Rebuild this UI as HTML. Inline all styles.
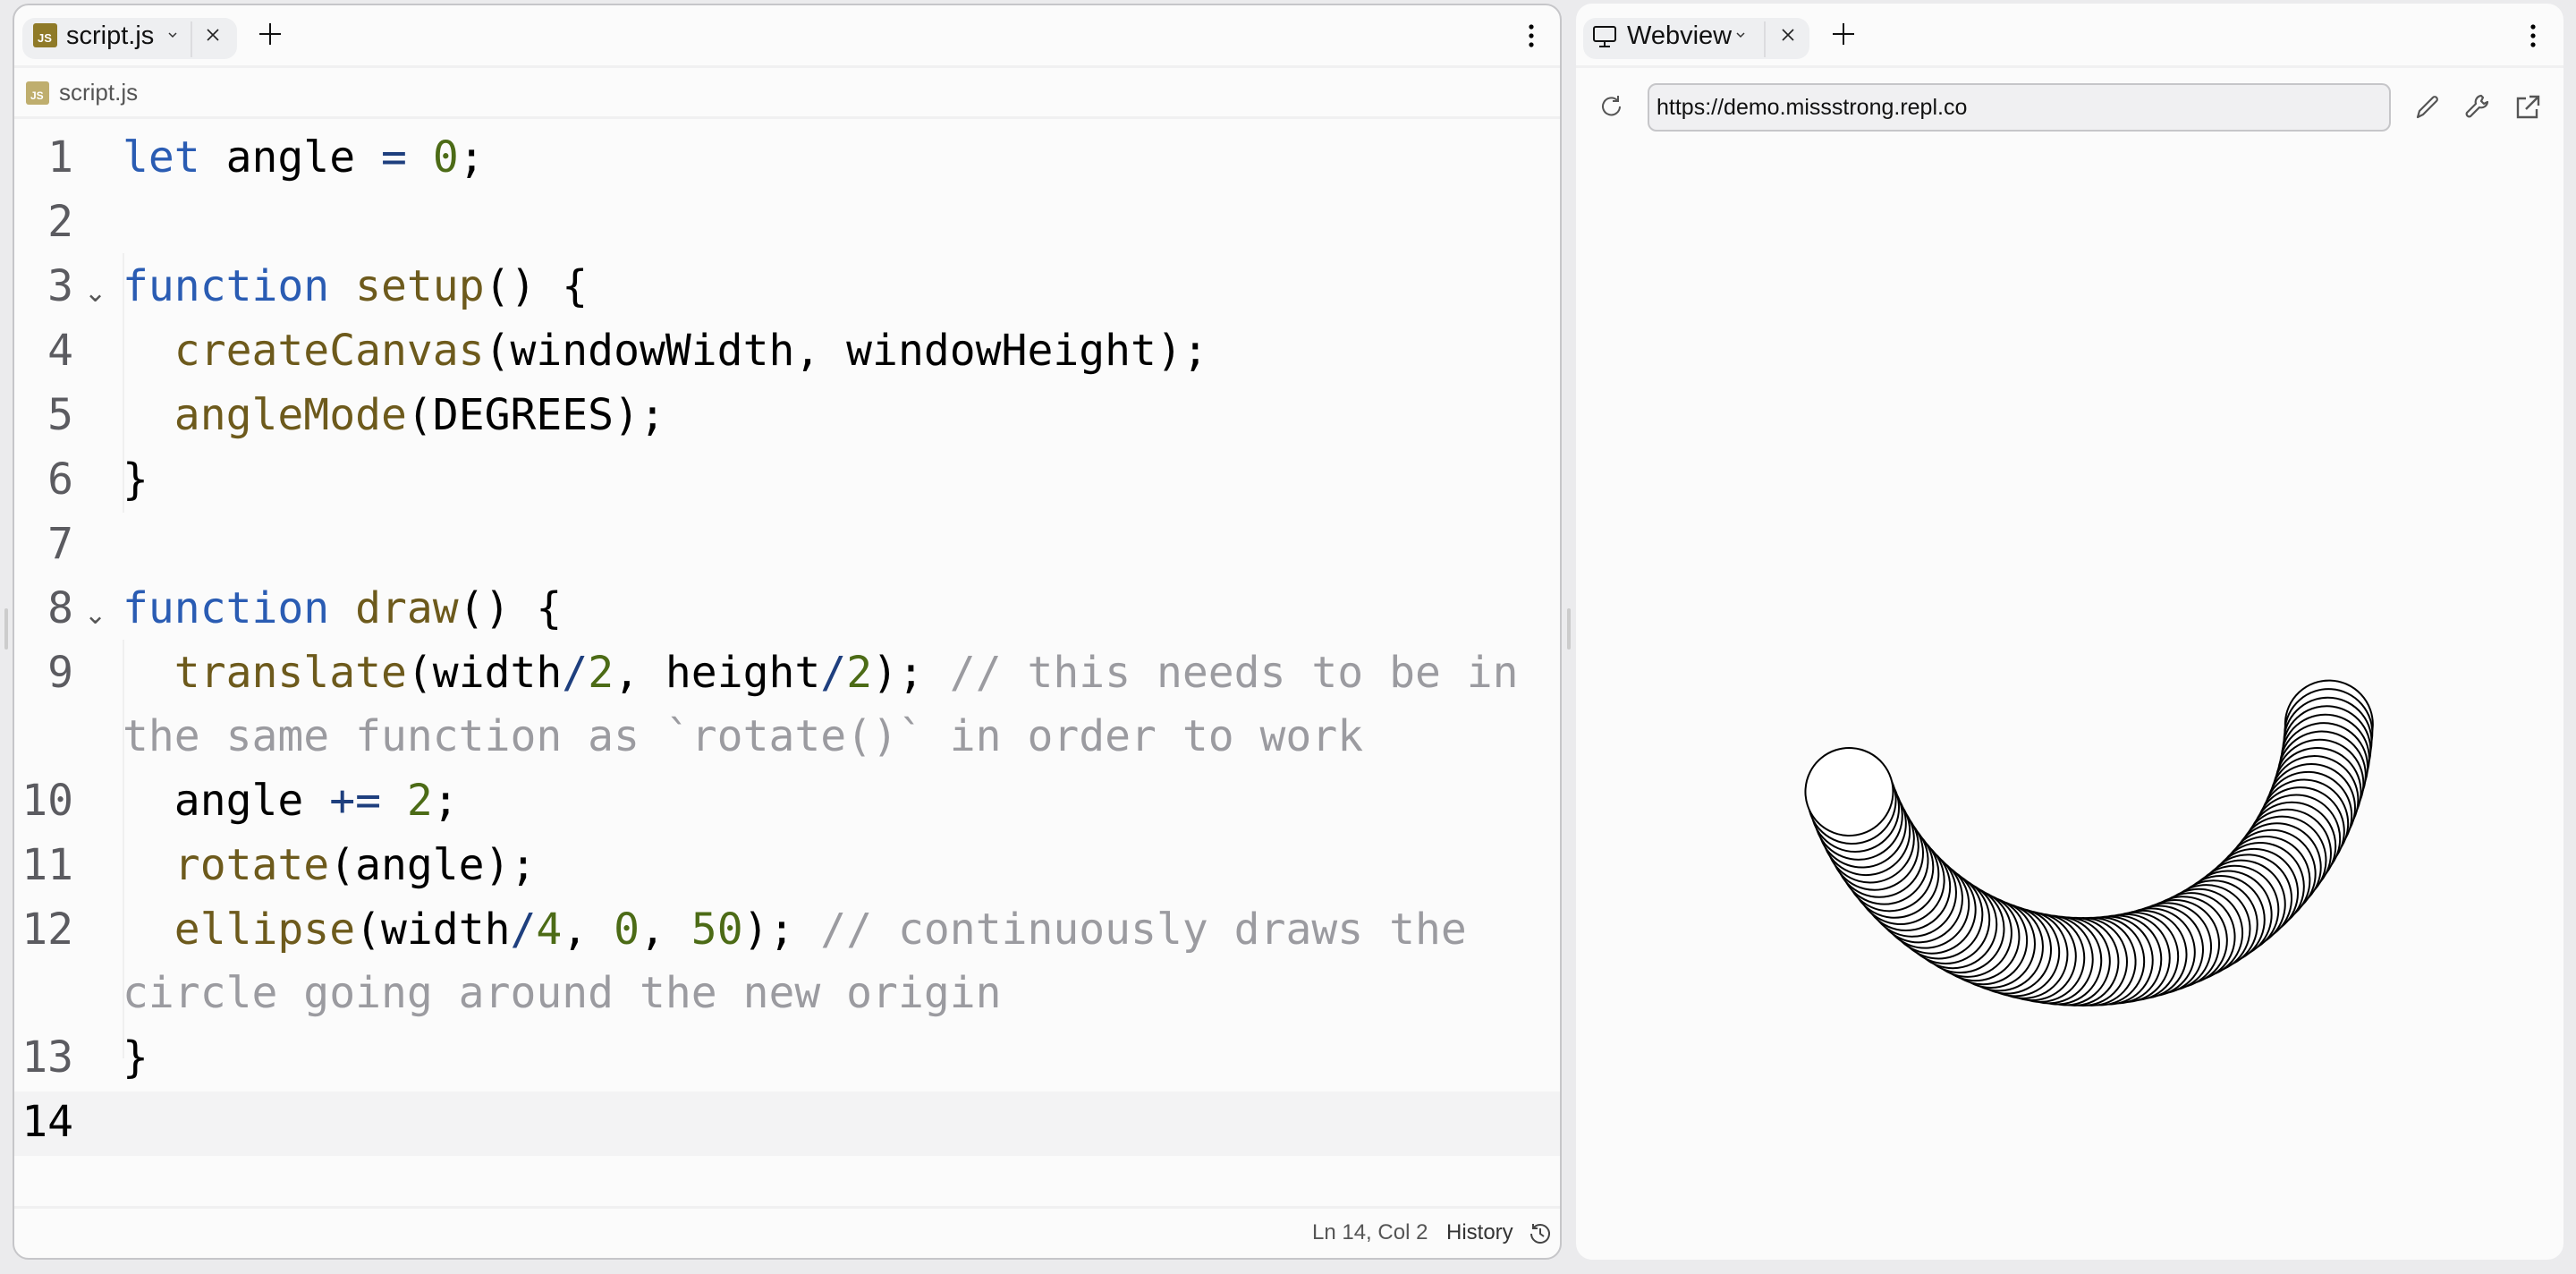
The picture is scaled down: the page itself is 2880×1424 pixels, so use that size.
<!DOCTYPE html>
<html style="width:2880px;height:1424px;overflow:hidden"><head><meta charset="utf-8"><style>
*{margin:0;padding:0;box-sizing:border-box}
body{width:2880px;height:1424px;background:#ebebed;position:relative;overflow:hidden;font-family:"Liberation Sans",sans-serif}
.p{position:absolute;background:#fbfbfb;border-radius:18px}
.a{position:absolute}
.code{position:absolute;left:0;font-family:"DejaVu Sans Mono","Liberation Mono",monospace;font-size:48px;line-height:72px;white-space:pre;color:#000}
.ln{position:absolute;width:82px;text-align:right;left:0;color:#5b5b60}
.k{color:#2a5cb3}.f{color:#6d5a1c}.n{color:#4c6b16}.o{color:#1e3f7e}.c{color:#9b9ba0}
.fold{position:absolute;left:94px;color:#555;font-size:30px;font-family:"DejaVu Sans",sans-serif}
.circ{position:absolute;left:0;top:0;width:2880px;height:1424px;overflow:hidden}
.circ i{position:absolute;left:2279px;top:750px;width:100px;height:100px;border:2px solid #000;border-radius:50%;background:#fff;transform:rotate(calc(var(--a)*1deg)) translateX(275px)}
.ui{font-size:27px;color:#111}
</style></head><body>
<!-- left panel -->
<div class="p" style="left:14px;top:4px;width:1732px;height:1404px;border:2px solid #c6c6c9;"></div>
<div class="a" style="left:16px;top:73px;width:1728px;height:3px;background:#f0f0f1"></div>
<div class="a" style="left:16px;top:130px;width:1728px;height:3px;background:#f0f0f1"></div>
<div class="a" style="left:16px;top:1348px;width:1728px;height:3px;background:#f0f0f1"></div>
<!-- tab -->
<div class="a" style="left:25px;top:20px;width:240px;height:46px;background:#eeeff1;border-radius:14px"></div>
<div class="a" style="left:37px;top:26px;width:27px;height:27px;background:#8f7a28;border-radius:3px;color:#fff;font-size:13px;font-weight:bold;padding:10px 0 0 5px;line-height:14px">JS</div>
<div class="a ui" style="left:74px;top:24px;font-size:29px">script.js</div>
<svg class="a" style="left:186px;top:32px" width="14" height="14" viewBox="0 0 14 14"><path d="M3 5l4 4 4-4" fill="none" stroke="#333" stroke-width="1.5"/></svg>
<div class="a" style="left:213px;top:24px;width:2px;height:40px;background:#dcdcdf"></div>
<svg class="a" style="left:230px;top:31px" width="16" height="16"><path d="M2 2l12 12M14 2L2 14" stroke="#222" stroke-width="1.6"/></svg>
<svg class="a" style="left:289px;top:25px" width="26" height="26"><path d="M13 1v24M1 13h24" stroke="#111" stroke-width="2"/></svg>
<svg class="a" style="left:1706px;top:26px" width="12" height="28"><circle cx="6" cy="4" r="2.6"/><circle cx="6" cy="14" r="2.6"/><circle cx="6" cy="24" r="2.6"/></svg>
<!-- breadcrumb -->
<div class="a" style="left:29px;top:91px;width:26px;height:26px;background:#bfae6e;border-radius:3px;color:#fff;font-size:12px;font-weight:bold;padding:10px 0 0 5px;line-height:13px">JS</div>
<div class="a" style="left:66px;top:88px;font-size:26px;color:#555">script.js</div>
<!-- active line -->
<div class="a" style="left:16px;top:1220px;width:1728px;height:72px;background:#f3f3f4"></div>
<div class="a" style="left:137px;top:283px;width:2px;height:290px;background:#efefef"></div>
<div class="a" style="left:137px;top:715px;width:2px;height:468px;background:#efefef"></div>
<!-- code -->
<div class="code" style="top:140px">
<div class="ln" style="top:0">1</div>
<div class="ln" style="top:72px">2</div>
<div class="ln" style="top:144px">3</div><div class="fold" style="top:152px">⌄</div>
<div class="ln" style="top:216px">4</div>
<div class="ln" style="top:288px">5</div>
<div class="ln" style="top:360px">6</div>
<div class="ln" style="top:432px">7</div>
<div class="ln" style="top:504px">8</div><div class="fold" style="top:512px">⌄</div>
<div class="ln" style="top:576px">9</div>
<div class="ln" style="top:719px">10</div>
<div class="ln" style="top:791px">11</div>
<div class="ln" style="top:863px">12</div>
<div class="ln" style="top:1006px">13</div>
<div class="ln" style="top:1078px;color:#000">14</div>
<div class="a" style="left:137px;top:0"><span class="k">let</span> angle <span class="o">=</span> <span class="n">0</span>;</div>
<div class="a" style="left:137px;top:144px"><span class="k">function</span> <span class="f">setup</span>() {</div>
<div class="a" style="left:137px;top:216px">  <span class="f">createCanvas</span>(windowWidth, windowHeight);</div>
<div class="a" style="left:137px;top:288px">  <span class="f">angleMode</span>(DEGREES);</div>
<div class="a" style="left:137px;top:360px">}</div>
<div class="a" style="left:137px;top:504px"><span class="k">function</span> <span class="f">draw</span>() {</div>
<div class="a" style="left:137px;top:576px">  <span class="f">translate</span>(width<span class="o">/</span><span class="n">2</span>, height<span class="o">/</span><span class="n">2</span>); <span class="c">// this needs to be in</span></div>
<div class="a" style="left:137px;top:647px"><span class="c">the same function as `rotate()` in order to work</span></div>
<div class="a" style="left:137px;top:719px">  angle <span class="o">+=</span> <span class="n">2</span>;</div>
<div class="a" style="left:137px;top:791px">  <span class="f">rotate</span>(angle);</div>
<div class="a" style="left:137px;top:863px">  <span class="f">ellipse</span>(width<span class="o">/</span><span class="n">4</span>, <span class="n">0</span>, <span class="n">50</span>); <span class="c">// continuously draws the</span></div>
<div class="a" style="left:137px;top:934px"><span class="c">circle going around the new origin</span></div>
<div class="a" style="left:137px;top:1006px">}</div>
</div>
<!-- status -->
<div class="a" style="left:1467px;top:1364px;font-size:24px;color:#555">Ln 14, Col 2</div>
<div class="a" style="left:1617px;top:1364px;font-size:24px;color:#333">History</div>
<svg class="a" style="left:1709px;top:1366px" width="26" height="26" viewBox="0 0 26 26"><path d="M5 7A10 10 0 1 1 3 13M5 2v5h5M13 7v6l4 3" fill="none" stroke="#444" stroke-width="2"/></svg>
<div class="a" style="left:5px;top:680px;width:4px;height:46px;background:#ccc;border-radius:2px"></div>
<div class="a" style="left:1752px;top:680px;width:4px;height:46px;background:#ccc;border-radius:2px"></div>
<!-- right panel -->
<div class="p" style="left:1762px;top:4px;width:1104px;height:1404px"></div>
<div class="a" style="left:1762px;top:73px;width:1104px;height:3px;background:#f0f0f1"></div>
<div class="a" style="left:1770px;top:20px;width:253px;height:46px;background:#eeeff1;border-radius:14px"></div>
<svg class="a" style="left:1780px;top:27px" width="28" height="28" viewBox="0 0 28 28"><rect x="2" y="3" width="24" height="16" rx="2" fill="none" stroke="#111" stroke-width="2"/><path d="M14 19v6M8 25h12" stroke="#111" stroke-width="2"/></svg>
<div class="a ui" style="left:1819px;top:24px;font-size:29px">Webview</div>
<svg class="a" style="left:1939px;top:32px" width="14" height="14" viewBox="0 0 14 14"><path d="M3 5l4 4 4-4" fill="none" stroke="#333" stroke-width="1.5"/></svg>
<div class="a" style="left:1972px;top:24px;width:2px;height:40px;background:#dcdcdf"></div>
<svg class="a" style="left:1991px;top:31px" width="16" height="16"><path d="M2 2l12 12M14 2L2 14" stroke="#222" stroke-width="1.6"/></svg>
<svg class="a" style="left:2048px;top:25px" width="26" height="26"><path d="M13 1v24M1 13h24" stroke="#111" stroke-width="2"/></svg>
<svg class="a" style="left:2826px;top:26px" width="12" height="28"><circle cx="6" cy="4" r="2.6"/><circle cx="6" cy="14" r="2.6"/><circle cx="6" cy="24" r="2.6"/></svg>
<svg class="a" style="left:1788px;top:105px" width="28" height="28" viewBox="0 0 28 28"><path d="M23 14A9.5 9.5 0 1 1 20 7M21 2v6h-6" fill="none" stroke="#555" stroke-width="2"/></svg>
<div class="a" style="left:1842px;top:93px;width:831px;height:54px;background:#f0f0f2;border:2px solid #c6c6c9;border-radius:10px"></div>
<div class="a" style="left:1852px;top:106px;font-size:25px;color:#111">https://demo.missstrong.repl.co</div>
<svg class="a" style="left:2698px;top:104px" width="32" height="32" viewBox="0 0 32 32"><path d="M5 27l2-7L22 5a2.5 2.5 0 0 1 4 4L11 24z" fill="none" stroke="#555" stroke-width="2.2" stroke-linejoin="round"/></svg>
<svg class="a" style="left:2754px;top:104px" width="32" height="32" viewBox="0 0 32 32"><path d="M20 3a7 7 0 0 0-6 9L4 22a3 3 0 0 0 4 4l10-10a7 7 0 0 0 9-6l-4 2-3-3 2-4z" fill="none" stroke="#555" stroke-width="2.2" stroke-linejoin="round"/></svg>
<svg class="a" style="left:2810px;top:104px" width="32" height="32" viewBox="0 0 32 32"><path d="M14 6H5v21h21v-9M18 4h10v10M28 4L14 18" fill="none" stroke="#555" stroke-width="2.4"/></svg>
<!-- canvas drawing -->
<div class="circ">
<i style="--a:2"></i><i style="--a:4"></i><i style="--a:6"></i><i style="--a:8"></i><i style="--a:10"></i><i style="--a:12"></i><i style="--a:14"></i><i style="--a:16"></i><i style="--a:18"></i>
<i style="--a:20"></i><i style="--a:22"></i><i style="--a:24"></i><i style="--a:26"></i><i style="--a:28"></i><i style="--a:30"></i><i style="--a:32"></i><i style="--a:34"></i><i style="--a:36"></i><i style="--a:38"></i>
<i style="--a:40"></i><i style="--a:42"></i><i style="--a:44"></i><i style="--a:46"></i><i style="--a:48"></i><i style="--a:50"></i><i style="--a:52"></i><i style="--a:54"></i><i style="--a:56"></i><i style="--a:58"></i>
<i style="--a:60"></i><i style="--a:62"></i><i style="--a:64"></i><i style="--a:66"></i><i style="--a:68"></i><i style="--a:70"></i><i style="--a:72"></i><i style="--a:74"></i><i style="--a:76"></i><i style="--a:78"></i>
<i style="--a:80"></i><i style="--a:82"></i><i style="--a:84"></i><i style="--a:86"></i><i style="--a:88"></i><i style="--a:90"></i><i style="--a:92"></i><i style="--a:94"></i><i style="--a:96"></i><i style="--a:98"></i>
<i style="--a:100"></i><i style="--a:102"></i><i style="--a:104"></i><i style="--a:106"></i><i style="--a:108"></i><i style="--a:110"></i><i style="--a:112"></i><i style="--a:114"></i><i style="--a:116"></i><i style="--a:118"></i>
<i style="--a:120"></i><i style="--a:122"></i><i style="--a:124"></i><i style="--a:126"></i><i style="--a:128"></i><i style="--a:130"></i><i style="--a:132"></i><i style="--a:134"></i><i style="--a:136"></i><i style="--a:138"></i>
<i style="--a:140"></i><i style="--a:142"></i><i style="--a:144"></i><i style="--a:146"></i><i style="--a:148"></i><i style="--a:150"></i><i style="--a:152"></i><i style="--a:154"></i><i style="--a:156"></i><i style="--a:158"></i>
<i style="--a:160"></i><i style="--a:162"></i>
</div>
</body></html>
